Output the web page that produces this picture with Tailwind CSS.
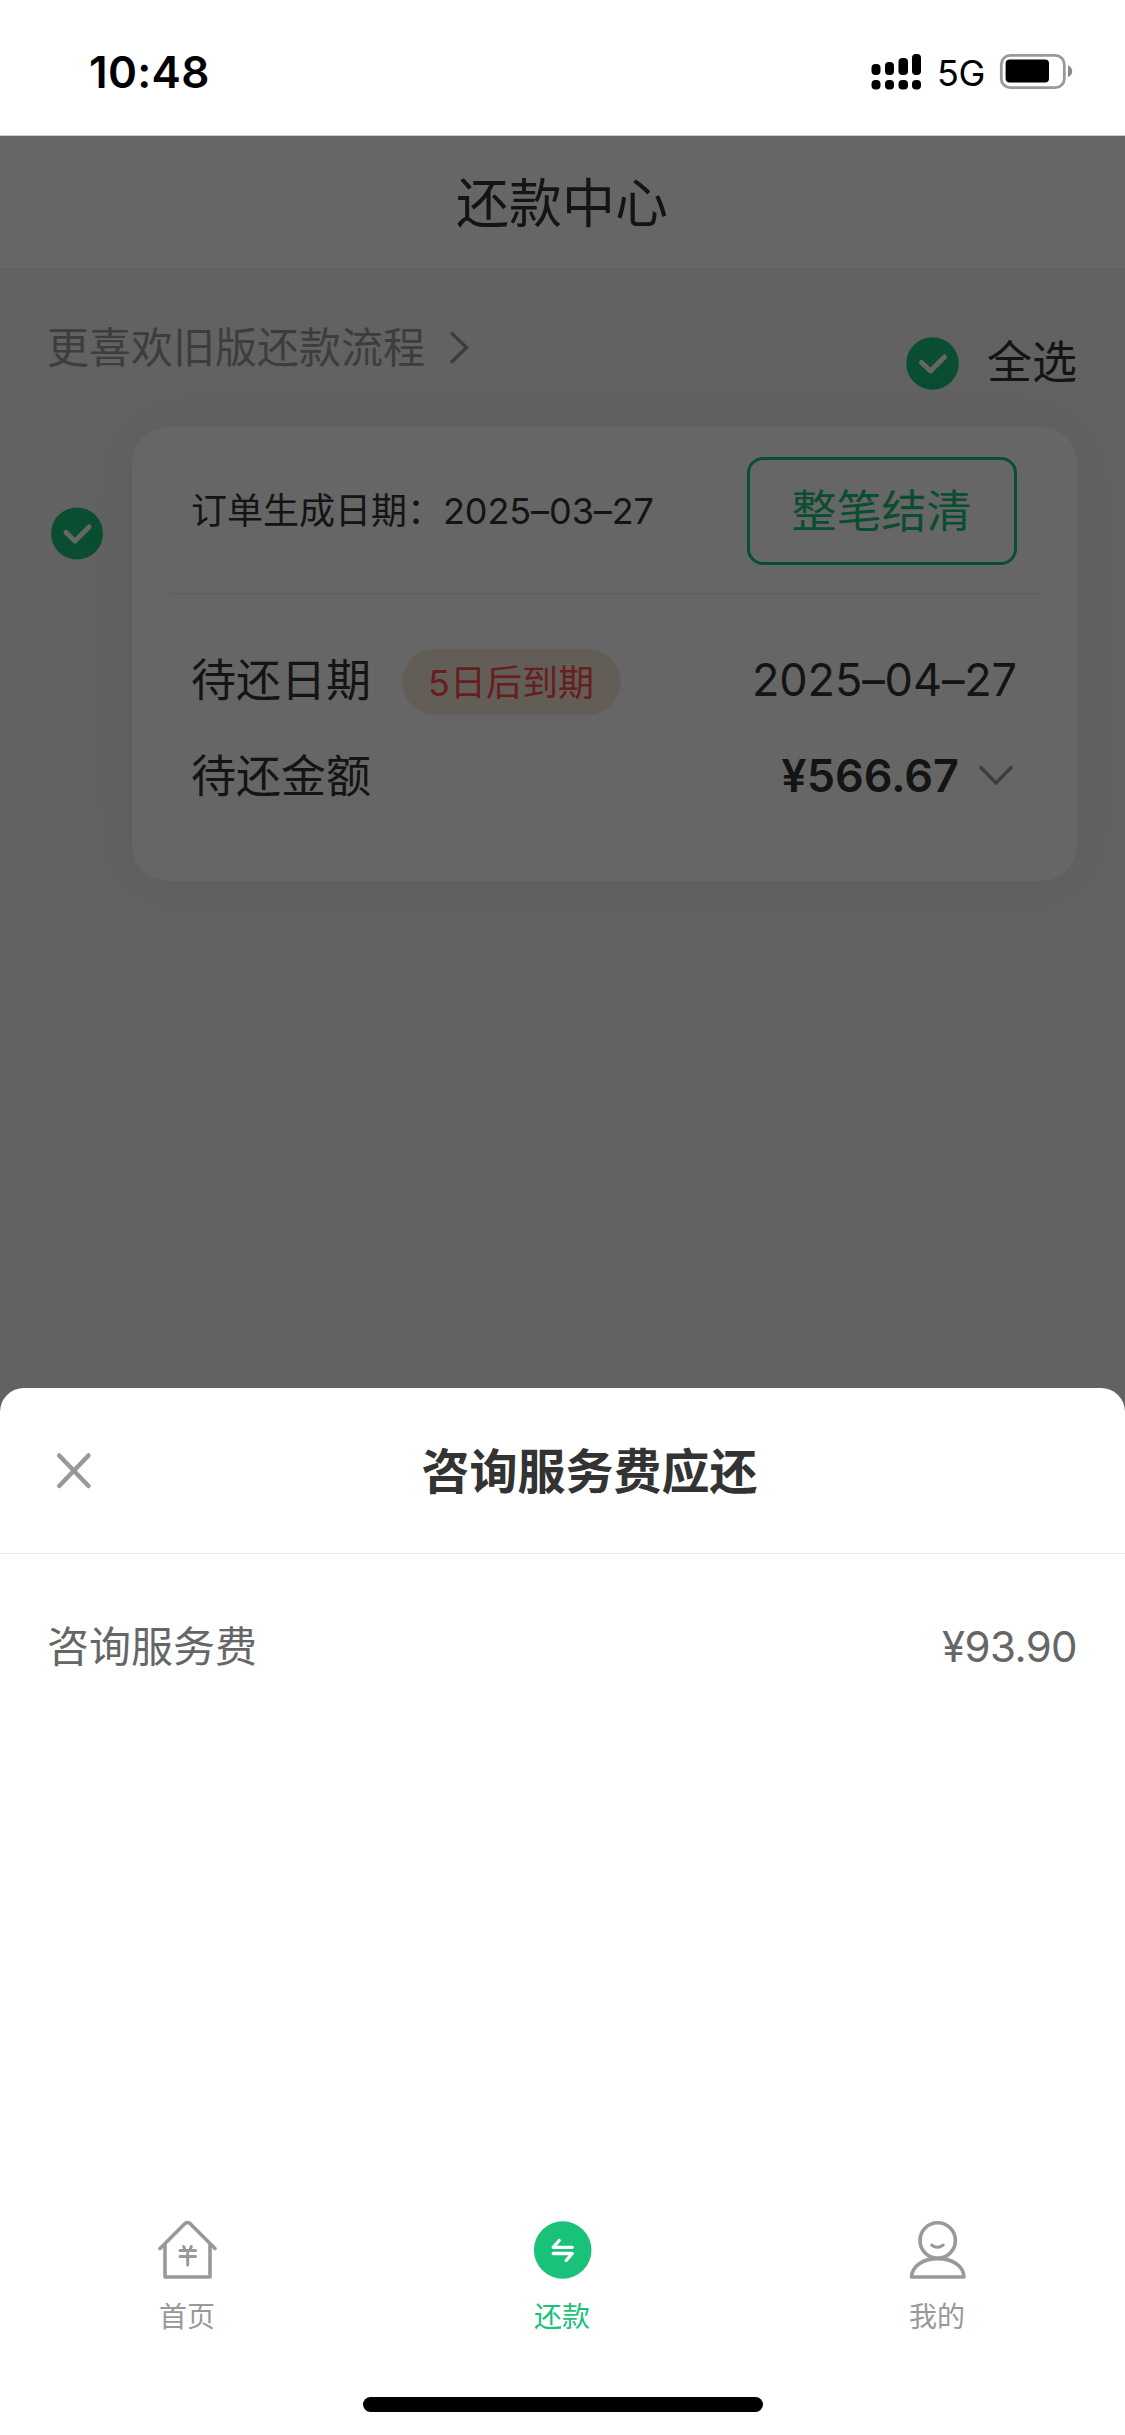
<!DOCTYPE html>
<html lang="zh-CN">
<head>
<meta charset="utf-8">
<title>还款中心</title>
<script src="https://cdn.jsdelivr.net/npm/@tailwindcss/browser@4"></script>
</head>
<body class="bg-white">
<div class="relative flex h-[2435px] w-[1125px] flex-col overflow-hidden bg-white font-['Inter','Noto_Sans_CJK_SC',sans-serif] text-[#333]">

  <!-- status bar -->
  <header class="flex h-[136px] shrink-0 items-start justify-between border-b border-[#cfcfcf] pt-[46px] pr-[52px] pl-[89px] text-black">
    <span class="text-[44px] leading-[52px] font-semibold tracking-[0.3px]">10:48</span>
    <div class="flex h-[52px] items-center">
      <svg class="mr-[15px] h-[52px] w-[51px]" viewBox="0 0 51 52" fill="currentColor">
        <rect x="0.5" y="18" width="9" height="11" rx="4"/><rect x="14" y="16" width="9" height="13" rx="4"/><rect x="27.5" y="12" width="9.5" height="17" rx="4"/><rect x="41" y="8" width="9" height="21" rx="4"/>
        <rect x="0.5" y="34" width="9" height="9.5" rx="4"/><rect x="14" y="34" width="9" height="9.5" rx="4"/><rect x="27.5" y="34" width="9.5" height="9.5" rx="4"/><rect x="41" y="34" width="9" height="9.5" rx="4"/>
      </svg>
      <span class="w-[62px] pt-[1px] text-[36px] leading-[52px] tracking-[-0.5px]">5G</span>
      <svg class="h-[52px] w-[74px]" viewBox="0 0 74 52">
        <rect x="2.3" y="9.3" width="63" height="32.4" rx="9" fill="none" stroke="#999" stroke-width="2.8"/>
        <rect x="6.600" y="13.500" width="43.400" height="23" rx="4" fill="#000"/>
        <path d="M69 19.500C72 20.500 73.200 23 73.200 25.200S72 30 69 31Z" fill="#888"/>
      </svg>
    </div>
  </header>

  <!-- page under the mask -->
  <main class="relative flex-1 bg-[#f5f5f5]">
    <h1 class="flex h-[132px] items-center justify-center bg-white pt-[3px] pr-[1px] text-[53px] leading-[60px] font-normal">还款中心</h1>

    <div class="flex items-start justify-between pr-[48px] pl-[47px]">
      <div class="mt-[50px] flex items-center gap-[23px] text-[42px] leading-[60px] text-[#999]">
        <span>更喜欢旧版还款流程</span>
        <svg class="h-[36px] w-[22px]" viewBox="0 0 22 36" fill="none" stroke="currentColor" stroke-width="3.4"><path d="M3 2.500L18.500 17.500 3 32.500"/></svg>
      </div>
      <div class="mt-[65px] flex items-center gap-[28px] text-[45px] leading-[60px]">
        <svg class="size-[53px]" viewBox="0 0 53 53"><circle cx="26.500" cy="26.500" r="26.300" fill="#19c179"/><path d="M15.500 25.500L24.500 34 38.500 20" fill="none" stroke="#fff" stroke-width="5" stroke-linecap="round" stroke-linejoin="round"/></svg>
        <span>全选</span>
      </div>
    </div>

    <div class="mt-[34px] flex items-start pl-[51px]">
      <svg class="mt-[80px] mr-[28px] size-[53px]" viewBox="0 0 53 53"><circle cx="26" cy="26.500" r="26" fill="#19c179"/><path d="M15 25.500L24 34 38 20" fill="none" stroke="#fff" stroke-width="5" stroke-linecap="round" stroke-linejoin="round"/></svg>
      <section class="h-[454px] w-[945px] rounded-[36px] bg-white px-[37px] shadow-[0_0_60px_rgba(0,0,0,0.07)]">
        <div class="flex h-[168px] items-center justify-between border-b-2 border-[#f6f6f6] pr-[23px] pl-[22px]">
          <p class="flex pt-[2px] text-[36px] leading-[50px]"><span>订单生成日期：</span><span class="tracking-[-0.1px]">2025–03–27</span></p>
          <button class="mt-[1px] h-[108px] w-[270px] rounded-[16px] border-[3px] border-[#19c179] pt-[2px] pr-[1px] text-[45px] leading-[60px] text-[#19c179]">整笔结清</button>
        </div>
        <div class="mt-[54px] flex h-[66px] items-center pr-[23px] pl-[22px] text-[45px] leading-[60px]">
          <span class="-mt-[2px]">待还日期</span>
          <span class="ml-[31px] flex h-[66px] w-[219px] items-center justify-center rounded-full bg-[#f4e9da] pt-[2px] pr-[1px] text-[36px] leading-[50px] text-[#ff4d4f]">5日后到期</span>
          <span class="-mt-[4px] ml-auto tracking-[-0.1px]">2025–04–27</span>
        </div>
        <div class="mt-[30px] flex h-[60px] items-center pr-[26px] pl-[22px] text-[45px] leading-[60px]">
          <span class="pt-[3px]">待还金额</span>
          <span class="ml-auto pt-[1px] font-semibold">¥566.67</span>
          <svg class="ml-[19px] h-[22px] w-[36px]" viewBox="0 0 36 22" fill="none" stroke="#999" stroke-width="3.400"><path d="M2 2.500L18 19 34 2.500"/></svg>
        </div>
      </section>
    </div>
    <div class="absolute inset-0 bg-black/60"></div>
  </main>

  <!-- bottom sheet -->
  <section class="absolute inset-x-0 bottom-0 flex h-[1047px] flex-col rounded-t-[24px] bg-white">
    <div class="flex h-[166px] shrink-0 items-center border-b-[1px] border-[#eaeaea] pl-[56px]">
      <svg class="h-[38px] w-[37px]" viewBox="0 0 37 38" fill="none" stroke="#999" stroke-width="4.500" stroke-linecap="round"><path d="M3.200 3.500L32.500 34M32.500 3.500L3.200 34"/></svg>
      <h2 class="flex-1 pt-[3px] pr-[39px] text-center text-[48px] leading-[60px] font-semibold">咨询服务费应还</h2>
    </div>
    <div class="mt-[62px] flex items-center justify-between pr-[48px] pl-[47px] text-[42px] leading-[60px] text-[#666]">
      <span class="pt-[1px]">咨询服务费</span>
      <span class="tracking-[-0.600px]">¥93.90</span>
    </div>

    <nav class="mt-auto grid grid-cols-3 text-[28px] leading-[40px] text-[#999]">
      <a class="flex flex-col items-center gap-[17px]">
        <svg class="size-[60px]" viewBox="0 0 60 60" fill="none" stroke="currentColor" stroke-width="3.600" stroke-linecap="round" stroke-linejoin="round"><path d="M2 28.500L27 3.500Q29.500 1.500 32 3.500L57 28.500M7 24.500V57H52V24.500"/><path d="M25.700 26.500L26.700 29M33.300 26.500L32.300 29M22 30.500H37.500M22 36.500H37.500M29.700 31V45" stroke-width="3"/></svg>
        <span class="pr-[1px]">首页</span>
      </a>
      <a class="flex flex-col items-center gap-[17px] text-[#19c179]">
        <svg class="size-[60px]" viewBox="0 0 60 60"><circle cx="29.700" cy="30" r="28.800" fill="currentColor"/><path d="M39.200 27.300H20.200L26.200 20.500M20.200 33.500H39.200L33.200 40.500" fill="none" stroke="#fff" stroke-width="3.300" stroke-linecap="round" stroke-linejoin="round"/></svg>
        <span class="pr-[1px]">还款</span>
      </a>
      <a class="flex flex-col items-center gap-[17px]">
        <svg class="size-[60px]" viewBox="0 0 60 60" fill="none" stroke="currentColor" stroke-width="3.600" stroke-linejoin="round"><circle cx="29.700" cy="20.500" r="17.700"/><path d="M3.500 57C4.200 46 14.700 38.600 29.700 38.600S55.700 46 55.900 57Z"/><path d="M23.700 25Q29.400 29.500 35.200 25" stroke-width="3" stroke-linecap="round"/></svg>
        <span class="pr-[1px]">我的</span>
      </a>
    </nav>
    <div class="mx-auto mt-[60px] mb-[23px] h-[15px] w-[400px] shrink-0 rounded-full bg-black"></div>
  </section>
</div>
</body>
</html>
